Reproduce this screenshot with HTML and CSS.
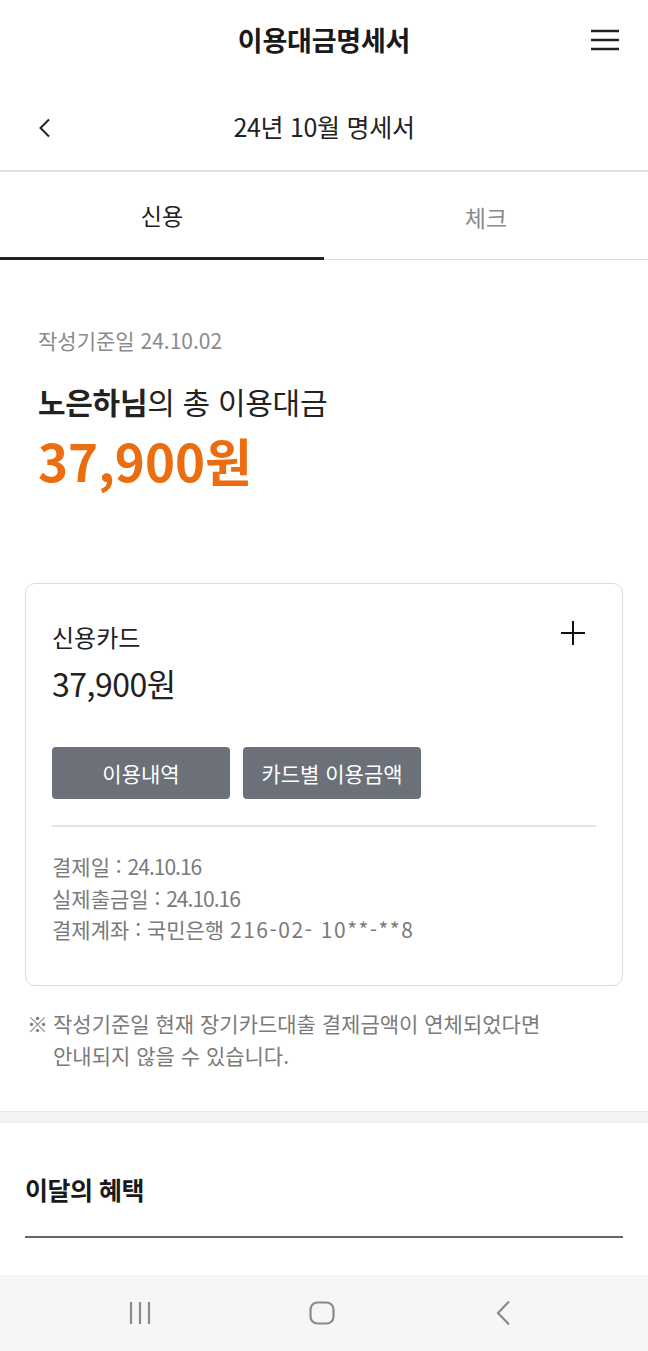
FILE: index.html
```html
<!DOCTYPE html>
<html lang="ko">
<head>
<meta charset="utf-8">
<title>이용대금명세서</title>
<link rel="stylesheet" href="styles.css">
</head>
<body>
<div class="page">
  <header class="topbar">
    <span></span>
    <h1 class="topbar-title">이용대금명세서</h1>
    <button class="menu-btn" aria-label="메뉴">
      <svg width="28" height="22" viewBox="0 0 28 22"><path d="M0 2h28M0 11h28M0 20h28" stroke="#222" stroke-width="2.6"/></svg>
    </button>
  </header>

  <div class="subbar">
    <button class="back-btn" aria-label="이전">
      <svg width="14" height="20" viewBox="0 0 14 20"><path d="M11 1.5L2.5 10l8.5 8.5" fill="none" stroke="#222" stroke-width="2"/></svg>
    </button>
    <div class="subbar-title">24년 10월 명세서</div>
    <span></span>
  </div>

  <nav class="tabs">
    <div class="tab active">신용</div>
    <div class="tab">체크</div>
  </nav>

  <main class="content">
    <section class="summary">
      <div class="base-date">작성기준일 24.10.02</div>
      <div class="total-title"><strong>노은하님</strong>의 총 이용대금</div>
      <div class="total-amount">37,900원</div>
    </section>

    <section class="card">
      <div class="card-head">
        <div>
          <div class="card-name">신용카드</div>
          <div class="card-amount">37,900원</div>
        </div>
        <svg class="plus" width="24" height="24" viewBox="0 0 24 24"><path d="M12 0v24M0 12h24" stroke="#111" stroke-width="2"/></svg>
      </div>
      <div class="card-btns">
        <button class="gray-btn">이용내역</button>
        <button class="gray-btn">카드별 이용금액</button>
      </div>
      <div class="card-info">
        <div>결제일 : <span class="num">24.10.16</span></div>
        <div>실제출금일 : <span class="num">24.10.16</span></div>
        <div>결제계좌 : 국민은행 <span class="acct">216-02- 10**-**8</span></div>
      </div>
    </section>

    <p class="note"><span class="note-mark">※</span><span>작성기준일 현재 장기카드대출 결제금액이 연체되었다면<br>안내되지 않을 수 있습니다.</span></p>
  </main>

  <div class="band"></div>

  <section class="benefit">
    <h2 class="benefit-title">이달의 혜택</h2>
  </section>

  <footer class="sysnav">
    <svg width="24" height="24" viewBox="0 0 24 24"><path d="M2 1v22M11 1v22M20 1v22" stroke="#8a8a8a" stroke-width="2.2"/></svg>
    <svg width="26" height="24" viewBox="0 0 26 24"><rect x="1.5" y="1.5" width="23" height="21" rx="7" fill="none" stroke="#8a8a8a" stroke-width="2.2"/></svg>
    <svg width="16" height="26" viewBox="0 0 16 26"><path d="M14 1.5L3 13l11 11.5" fill="none" stroke="#8a8a8a" stroke-width="2.2"/></svg>
  </footer>
</div>
</body>
</html>
```

FILE: styles.css
```css
* { box-sizing: border-box; margin: 0; padding: 0; }
html, body { background: #fff; }
body {
  font-family: "Noto Sans CJK KR", "Noto Sans", sans-serif;
  color: #222;
  width: 648px;
}
button { border: 0; background: none; font-family: inherit; cursor: pointer; }

.page { display: flex; flex-direction: column; min-height: 1351px; }

.topbar {
  height: 82px;
  display: grid;
  grid-template-columns: 1fr auto 1fr;
  align-items: center;
}
.topbar-title { font-size: 27px; font-weight: 700; letter-spacing: -0.2px; color: #1a1a1a; margin-top: -4px; }
.menu-btn { justify-self: end; margin-right: 29px; display: flex; margin-top: -3px; }

.subbar {
  height: 90px;
  display: grid;
  grid-template-columns: 1fr auto 1fr;
  align-items: center;
  border-bottom: 2px solid #e2e2e2;
}
.back-btn { justify-self: start; margin-left: 38px; display: flex; margin-top: 4px; }
.subbar-title { font-size: 25px; font-weight: 400; letter-spacing: -0.3px; color: #222; margin-top: -1px; }

.tabs { display: flex; height: 88px; }
.tab {
  flex: 1;
  display: flex;
  align-items: center;
  justify-content: center;
  font-size: 23px;
  color: #8a8a8a;
  border-bottom: 1px solid #dcdcdc;
  padding-top: 2px;
}
.tab.active { color: #222; border-bottom: 3px solid #222; padding-top: 0; }

.content { padding: 0 25px; }
.summary { padding: 65px 13px 0; }
.base-date { font-size: 21px; color: #8a8a8a; line-height: 30px; }
.total-title { font-size: 30px; line-height: 36px; margin-top: 28px; letter-spacing: -0.3px; color: #222; }
.total-title strong { font-weight: 700; }
.total-amount { font-size: 51px; font-weight: 700; color: #ec6d10; line-height: 74px; margin-top: 4px; }

.card {
  margin-top: 86px;
  border: 1px solid #dcdcdc;
  border-radius: 10px;
  padding: 37px 26px 39px 26px;
}
.card-head { display: flex; justify-content: space-between; align-items: flex-start; }
.card-name { font-size: 24px; line-height: 32px; color: #222; }
.card-amount { font-size: 32px; line-height: 40px; margin-top: 10px; letter-spacing: -0.5px; color: #222; }
.plus { margin-right: 11px; }

.card-btns { display: flex; gap: 13px; margin-top: 44px; }
.gray-btn {
  width: 178px;
  height: 52px;
  background: #6c7079;
  color: #fff;
  border-radius: 4px;
  font-size: 21px;
}
.card-info {
  margin-top: 26px;
  border-top: 2px solid #e3e3e3;
  padding-top: 24px;
  font-size: 21px;
  line-height: 31.5px;
  color: #7a7a7a;
}
.num { letter-spacing: -1px; }
.acct { letter-spacing: 1.5px; }

.note {
  display: flex;
  margin-top: 21px;
  padding-left: 2px;
  font-size: 21px;
  line-height: 32px;
  color: #7a7a7a;
}
.note-mark { width: 26px; flex: none; }

.band {
  margin-top: 40px;
  height: 12px;
  background: #f2f3f5;
  border-top: 1px solid #e8e9eb;
  border-bottom: 1px solid #e8e9eb;
}

.benefit { padding: 49px 25px 0; }
.benefit-title {
  font-size: 25px;
  font-weight: 700;
  letter-spacing: -0.5px;
  line-height: 34px;
  padding-bottom: 30px;
  border-bottom: 2px solid #666;
  color: #1a1a1a;
}

.sysnav {
  margin-top: auto;
  height: 76px;
  background: #f6f6f8;
  display: grid;
  grid-template-columns: repeat(3, 181px);
  justify-items: center;
  align-items: center;
  padding-left: 50px;
}
```
